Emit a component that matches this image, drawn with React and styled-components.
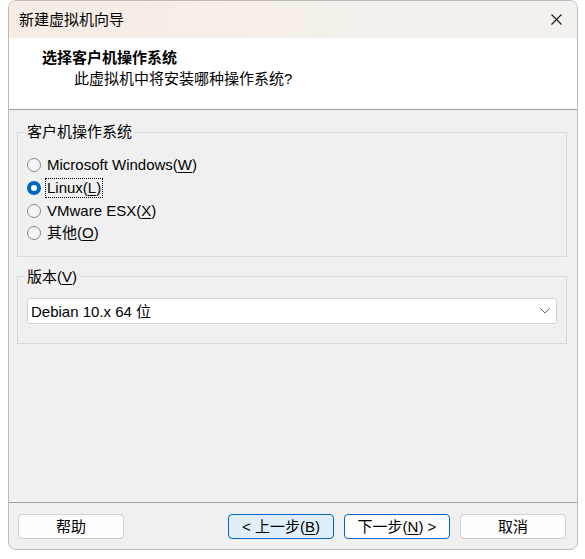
import styled, { createGlobalStyle } from 'styled-components';

const GlobalStyle = createGlobalStyle`
 html, body {
    margin: 0;
    padding: 0;
    background: #ffffff;
 }
 body {
    font-family: "Liberation Sans", "Noto Sans CJK SC", sans-serif;
    font-size: 15px;
    color: #000;
 }
`;

const Window = styled.div`
 box-sizing: border-box;
 width: 570px;
 height: 550px;
 margin: 0 0 0 8px;
 border: 1px solid #bcbcbc;
 border-radius: 8px;
 overflow: hidden;
 display: flex;
 flex-direction: column;
 background: #f0f0f0;
`;

const TitleBar = styled.div`
 height: 37px;
 flex: none;
 display: flex;
 align-items: center;
 justify-content: space-between;
 padding: 0 15px 0 10px;
 background: linear-gradient(90deg, #f7ece6 0%, #f5efea 55%, #f3f1ef 100%);
`;

const TitleText = styled.span`
 line-height: 20px;
`;

const Header = styled.div`
 height: 72px;
 flex: none;
 box-sizing: border-box;
 background: #ffffff;
 border-bottom: 1px solid #a0a0a0;
 padding-top: 10px;
`;

const Heading = styled.div`
 font-weight: bold;
 line-height: 20px;
 padding-left: 33px;
`;

const SubHeading = styled.div`
 line-height: 21px;
 padding-left: 65px;
`;

const Body = styled.div`
 flex: 1;
 padding: 0 10px 0 8px;
`;

const Group = styled.fieldset`
 margin: ${props => props.$top}px 0 0 0;
 padding: 0 9px ${props => props.$bottom}px 9px;
 border: 1px solid #d9d9d9;
 min-width: 0;
`;

const Legend = styled.legend`
 margin-left: -2px;
 padding: 0 2px;
 line-height: 20px;
`;

const RadioList = styled.div`
 display: flex;
 flex-direction: column;
 padding-top: 12px;
`;

const RadioRow = styled.label`
 display: flex;
 align-items: center;
 height: 22.7px;
 gap: 5px;
`;

const RadioDot = styled.span`
 box-sizing: border-box;
 width: 14px;
 height: 14px;
 border-radius: 50%;
 flex: none;
 border: ${props => (props.$checked ? '4px solid #0067c0' : '1px solid #878787')};
 background: ${props => (props.$checked ? '#ffffff' : '#f6f6f6')};
`;

const RadioLabel = styled.span`
 line-height: 18px;
 padding: 0 1px;
 outline: ${props => (props.$focused ? '1px dotted #000' : 'none')};
`;

const Key = styled.u`
 text-underline-offset: 2px;
`;

const Select = styled.div`
 box-sizing: border-box;
 height: 26px;
 margin-top: 11px;
 display: flex;
 align-items: center;
 justify-content: space-between;
 padding: 0 6px 0 3px;
 background: #ffffff;
 border: 1px solid #d2d2d2;
 border-radius: 3px;
`;

const Footer = styled.div`
 height: 47px;
 flex: none;
 box-sizing: border-box;
 border-top: 1px solid #a0a0a0;
 padding: 11px 11px 0 9px;
 display: flex;
 align-items: flex-start;
`;

const Button = styled.button`
 box-sizing: border-box;
 width: 106px;
 height: 25px;
 margin-left: ${props => props.$gap || 0}px;
 padding: 0;
 font-family: inherit;
 font-size: 15px;
 color: #000;
 border-radius: 4px;
 border: 1px solid ${props => (props.$accent ? '#0067c0' : '#d0d0d0')};
 background: ${props => (props.$pressed ? '#e0eef9' : '#fdfdfd')};
 line-height: 20px;
`;

const CloseIcon = () => (
  <svg width="11" height="11" viewBox="0 0 11 11">
    <path d="M0.5 0.5 L10.5 10.5 M10.5 0.5 L0.5 10.5" stroke="#1a1a1a" strokeWidth="1.1" fill="none" />
  </svg>
);

const Chevron = () => (
  <svg width="10" height="6" viewBox="0 0 10 6">
    <path d="M0.5 0.5 L5 5 L9.5 0.5" stroke="#6a6a6a" strokeWidth="1" fill="none" />
  </svg>
);

const osList = [
  { name: 'Microsoft Windows', key: 'W' },
  { name: 'Linux', key: 'L', checked: true },
  { name: 'VMware ESX', key: 'X' },
  { name: '其他', key: 'O' },
];

const App = () => {
  return (
    <>
      <GlobalStyle />
      <Window>
        <TitleBar>
          <TitleText>新建虚拟机向导</TitleText>
          <CloseIcon />
        </TitleBar>
        <Header>
          <Heading>选择客户机操作系统</Heading>
          <SubHeading>此虚拟机中将安装哪种操作系统?</SubHeading>
        </Header>
        <Body>
          <Group $top={12} $bottom={11}>
            <Legend>客户机操作系统</Legend>
            <RadioList>
              {osList.map(os => (
                <RadioRow key={os.key}>
                  <RadioDot $checked={os.checked} />
                  <RadioLabel $focused={os.checked}>
                    {os.name}(<Key>{os.key}</Key>)
                  </RadioLabel>
                </RadioRow>
              ))}
            </RadioList>
          </Group>
          <Group $top={10} $bottom={19}>
            <Legend>版本(<Key>V</Key>)</Legend>
            <Select>
              <span>Debian 10.x 64 位</span>
              <Chevron />
            </Select>
          </Group>
        </Body>
        <Footer>
          <Button>帮助</Button>
          <Button $gap={104} $accent $pressed>&lt; 上一步(<Key>B</Key>)</Button>
          <Button $gap={10} $accent>下一步(<Key>N</Key>) &gt;</Button>
          <Button $gap={10}>取消</Button>
        </Footer>
      </Window>
    </>
  );
};

export default App;
